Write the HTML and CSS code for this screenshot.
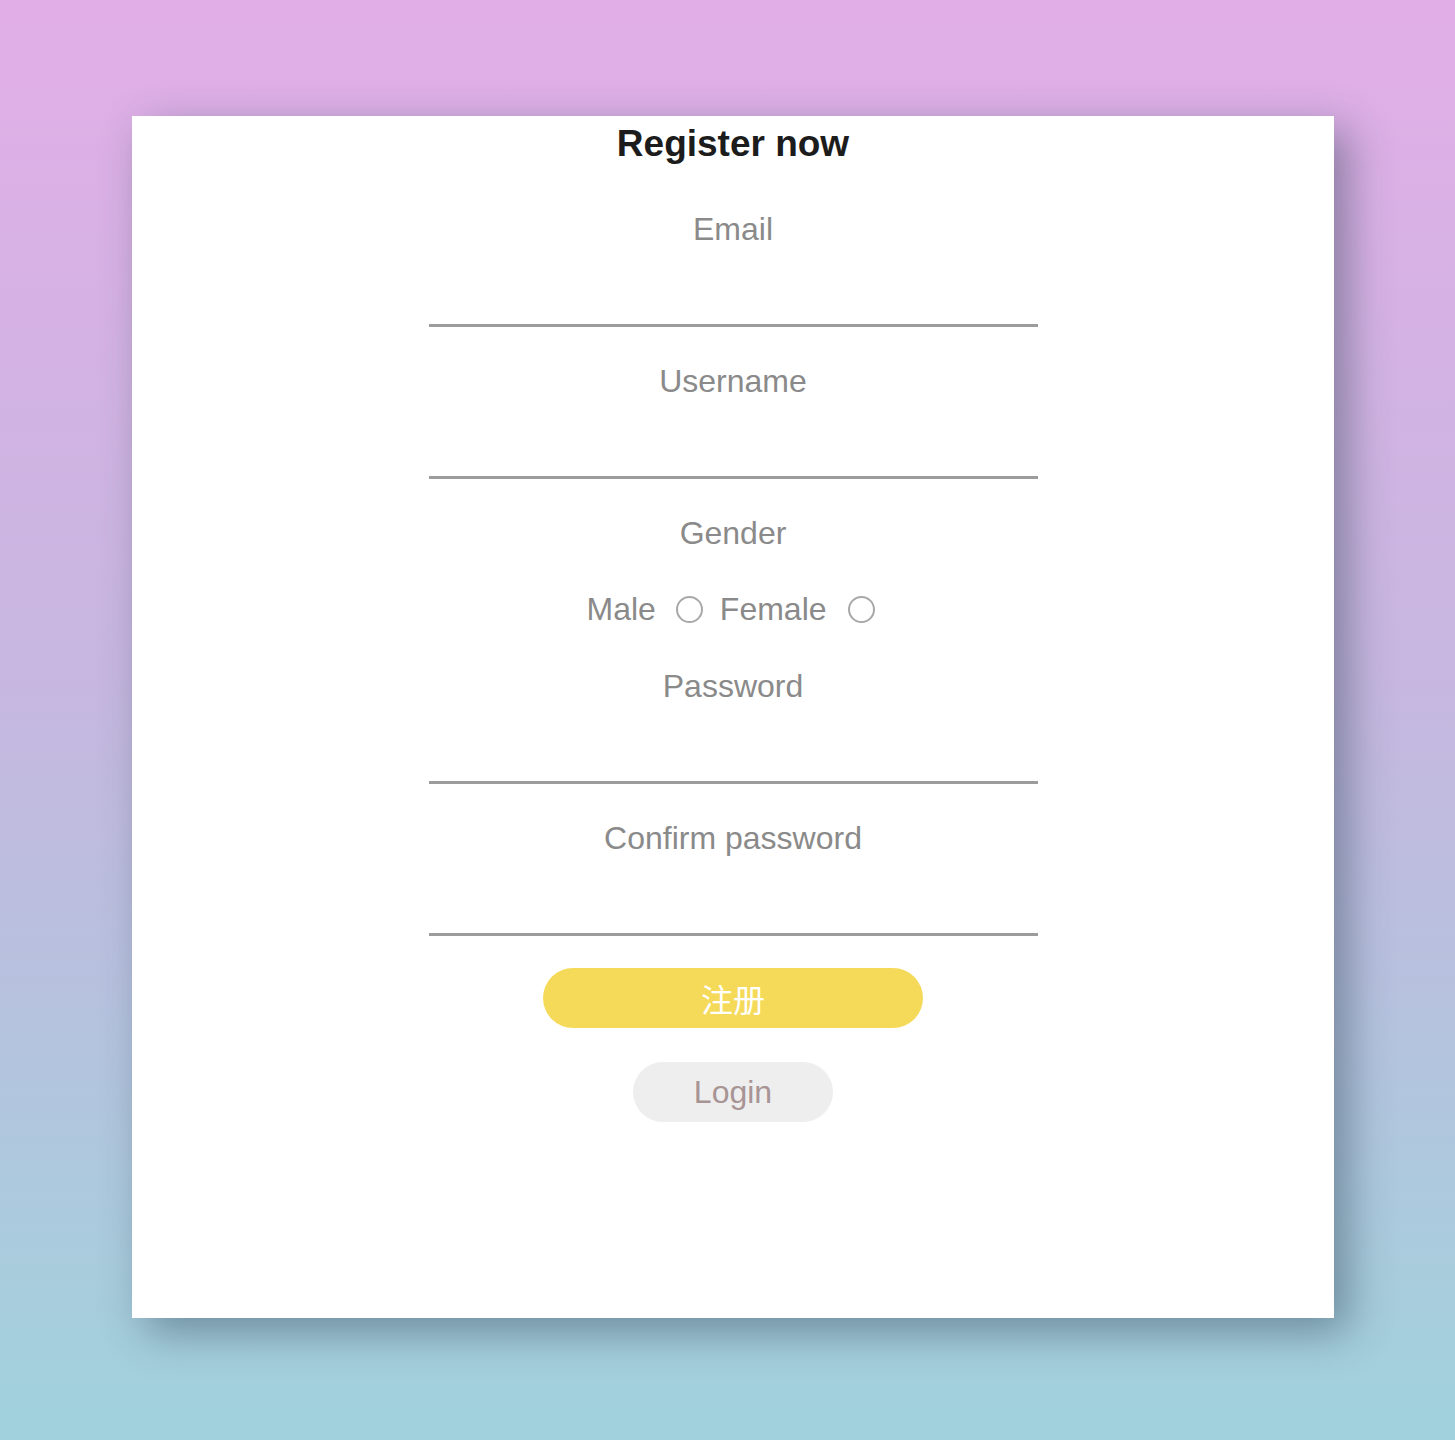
FILE: index.html
```html
<!DOCTYPE html>
<html lang="en">
<head>
<meta charset="utf-8">
<title>Register</title>
<link rel="stylesheet" href="styles.css">
</head>
<body>
<div class="card">
  <h1 class="title">Register now</h1>
  <form class="form">
    <label class="label" for="email">Email</label>
    <input class="field" id="email" type="text">
    <label class="label" for="username">Username</label>
    <input class="field" id="username" type="text">
    <div class="label label-gender">Gender</div>
    <div class="radios">
      <span class="radio-text">Male</span>
      <input class="radio radio-male" type="radio" name="gender">
      <span class="radio-text">Female</span>
      <input class="radio radio-female" type="radio" name="gender">
    </div>
    <label class="label" for="password">Password</label>
    <input class="field" id="password" type="password">
    <label class="label" for="confirm">Confirm password</label>
    <input class="field field-last" id="confirm" type="password">
    <button class="btn-register" type="button">注册</button>
    <button class="btn-login" type="button">Login</button>
  </form>
</div>
</body>
</html>
```

FILE: styles.css
```css
html, body {
  margin: 0;
  padding: 0;
}
body {
  width: 1455px;
  height: 1440px;
  background: linear-gradient(to bottom, #e2aee7 0%, #c6b7e0 48%, #a0d2dc 100%);
  font-family: "Liberation Sans", Arial, "Noto Sans CJK SC", sans-serif;
  overflow: hidden;
  display: flow-root;
}
.card {
  margin: 116px 0 0 132px;
  width: 1202px;
  height: 1202px;
  background: #ffffff;
  box-shadow: 14px 14px 40px rgba(40, 60, 80, 0.45);
  display: flex;
  flex-direction: column;
  align-items: center;
}
.title {
  margin: 0;
  font-size: 37px;
  line-height: 56px;
  font-weight: bold;
  color: #1c1c1c;
}
.form {
  display: flex;
  flex-direction: column;
  align-items: center;
  margin-top: 37px;
}
.label {
  display: block;
  font-size: 32px;
  line-height: 40px;
  height: 40px;
  color: #8a8a8a;
}
.label-gender {
  margin-bottom: 36px;
}
.field {
  display: block;
  box-sizing: border-box;
  width: 609px;
  height: 78px;
  margin: 0 0 34px 0;
  padding: 0;
  border: none;
  border-bottom: 3px solid #9c9c9c;
  outline: none;
  background: transparent;
  font-size: 32px;
}
.field-last {
  margin-bottom: 32px;
}
.radios {
  display: flex;
  align-items: center;
  height: 40px;
  margin-bottom: 37px;
  font-size: 32px;
  color: #8a8a8a;
  padding-right: 5px;
}
.radio-text {
  line-height: 40px;
}
.radio {
  appearance: none;
  -webkit-appearance: none;
  box-sizing: border-box;
  width: 27px;
  height: 27px;
  margin: 0;
  border: 2px solid #a8a8a8;
  border-radius: 50%;
  background: #fff;
}
.radio-male {
  margin: 0 17px 0 20px;
}
.radio-female {
  margin: 0 0 0 21px;
}
.btn-register {
  width: 380px;
  height: 60px;
  border: none;
  border-radius: 30px;
  background: #f5da5a;
  color: #ffffff;
  font-size: 32px;
  font-family: "Noto Sans CJK SC", "Noto Sans CJK TC", sans-serif;
  padding: 0;
  line-height: 56px;
  margin-bottom: 34px;
}
.btn-login {
  width: 200px;
  height: 60px;
  border: none;
  border-radius: 30px;
  background: #eeeeee;
  color: #a89494;
  font-size: 32px;
  font-family: "Liberation Sans", Arial, sans-serif;
  padding: 0;
  line-height: 60px;
}
```
